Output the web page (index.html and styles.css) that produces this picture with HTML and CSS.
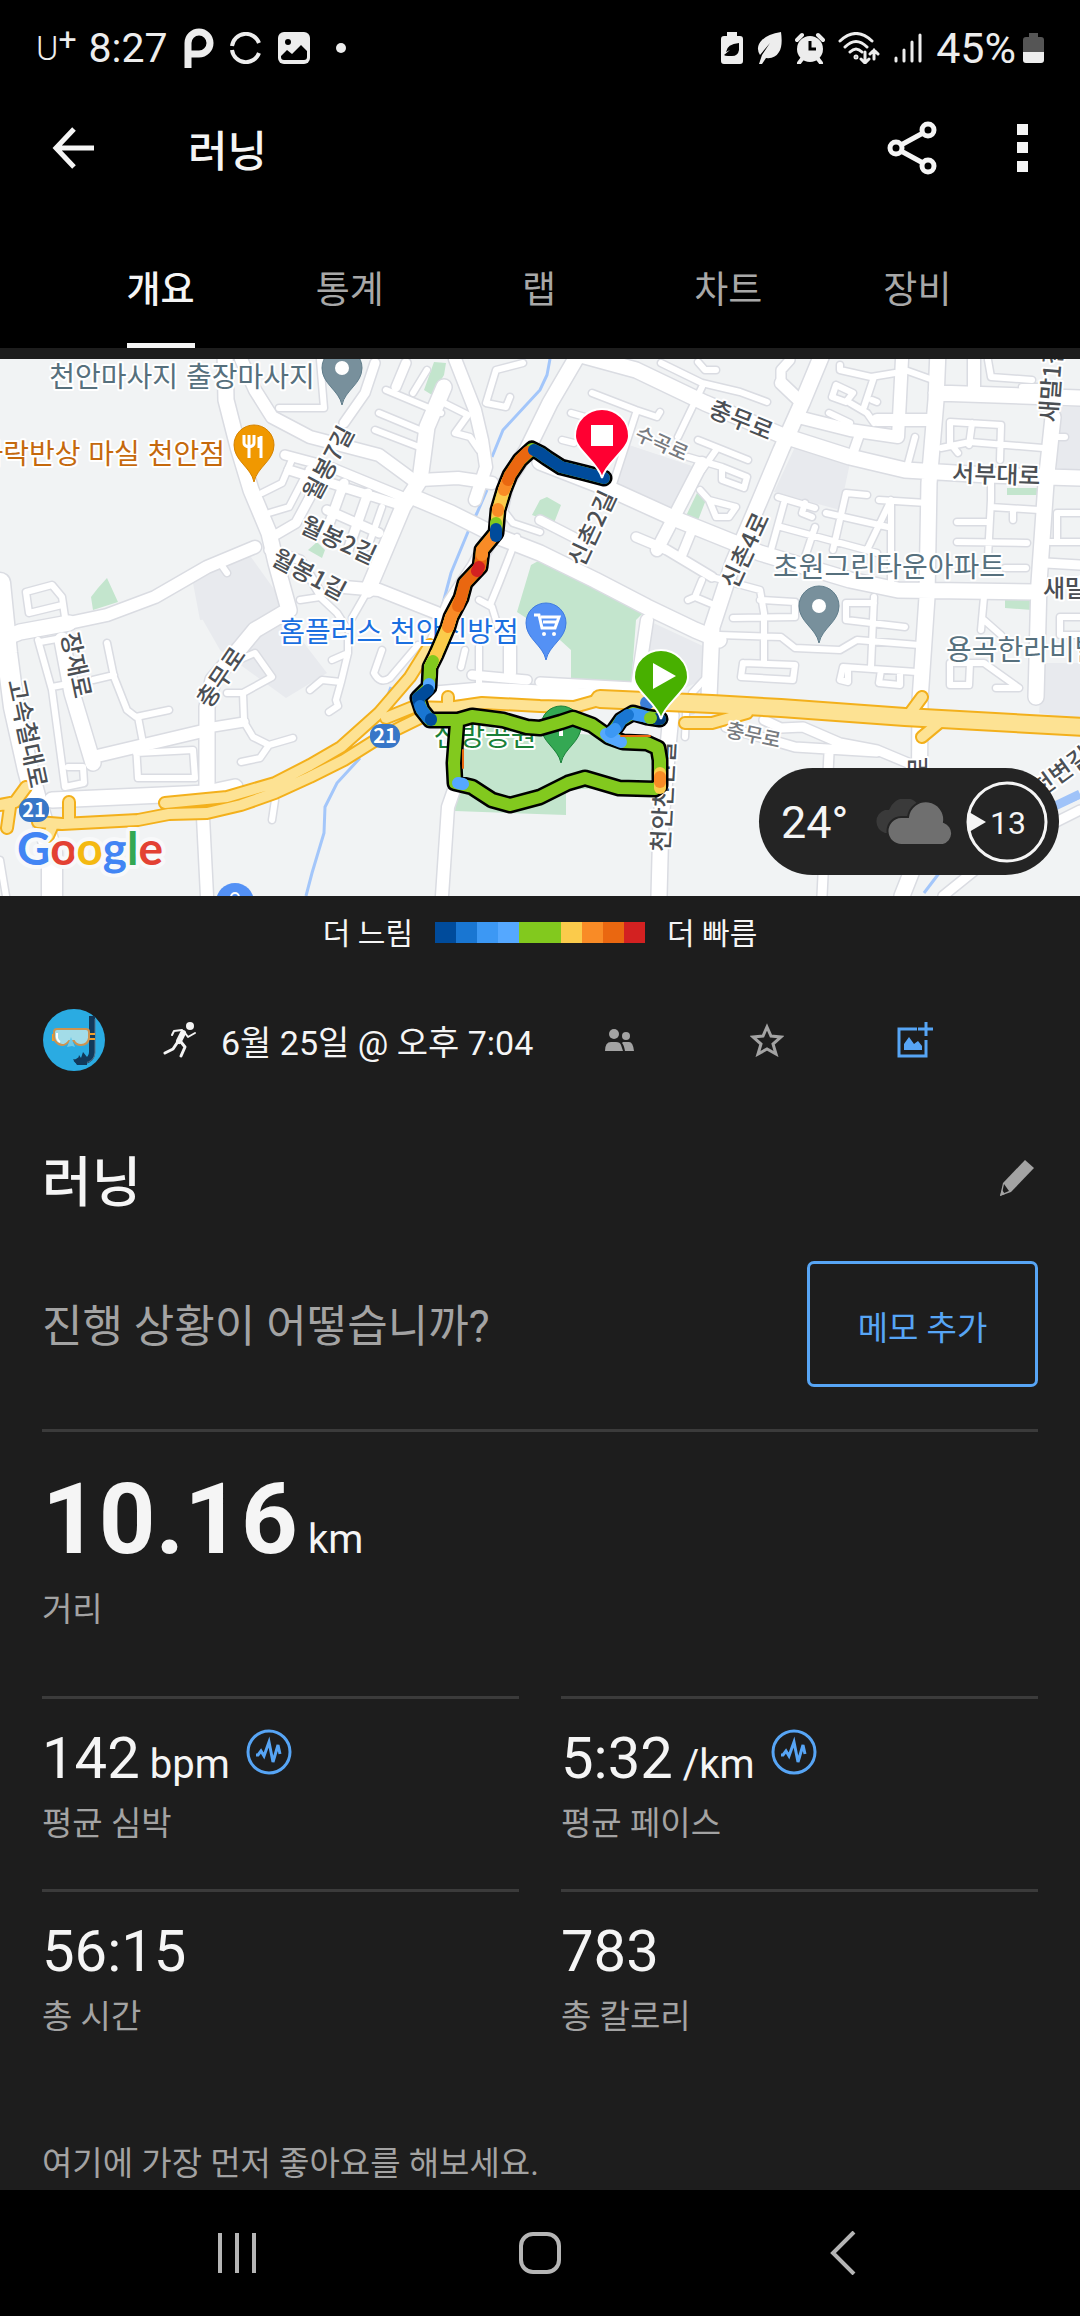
FILE: index.html
```html
<!DOCTYPE html>
<html lang="ko">
<head>
    <meta charset="UTF-8">
    <meta name="viewport" content="width=device-width, initial-scale=1.0">
    <title>러닝</title>
    <link rel="stylesheet" href="styles.css">
</head>
<body>
    <div class="status-bar">
        <div class="status-left">
            <span class="carrier">U<sup>+</sup></span>
            <span class="clock">8:27</span>
            <svg width="30" height="40" viewBox="0 0 30 40"><path d="M4 40V15A11 11 0 1 1 15 26H4" fill="none" stroke="#ededed" stroke-width="7"/></svg>
            <svg width="32" height="32" viewBox="0 0 32 32" fill="none" stroke="#ededed" stroke-width="4"><path d="M2 14A14 14 0 0 1 29 11"/><path d="M2 18A14 14 0 0 0 29 21"/></svg>
            <svg width="32" height="32" viewBox="0 0 32 32"><rect width="32" height="32" rx="6" fill="#ededed"/><circle cx="10" cy="10" r="3" fill="#000"/><path d="M3 24l6-6 5 4 9-9 6 6v6q0 3-3 3H6q-3 0-3-3z" fill="#000"/></svg>
            <span class="dot"></span>
        </div>
        <div class="status-right">
            <svg width="22" height="32" viewBox="0 0 22 32"><path d="M6 0h10v4h3a3 3 0 0 1 3 3v22a3 3 0 0 1-3 3H3a3 3 0 0 1-3-3V7a3 3 0 0 1 3-3h3z" fill="#ededed"/><path d="M18 11v7q-1 6-7 6H7q-3 0-4-1l6-5-4 2q1-8 13-9z" fill="#000"/></svg>
            <svg width="26" height="32" viewBox="0 0 26 32"><path d="M25 0q2 14-2 20-4 7-13 6L6 32H3l3-9 8-12-10 12Q-1 15 6 8 12 2 25 0z" fill="#ededed"/></svg>
            <svg width="30" height="32" viewBox="0 0 30 32"><circle cx="15" cy="17" r="13" fill="#ededed"/><path d="M2 8l5-5M28 8l-5-5M7 27l-3 4M23 27l3 4" stroke="#ededed" stroke-width="4" stroke-linecap="round"/><path d="M15 9v8h6" fill="none" stroke="#000" stroke-width="3"/></svg>
            <svg width="42" height="32" viewBox="0 0 42 32" fill="none" stroke="#ededed" stroke-width="3" stroke-linecap="round"><path d="M2 9Q18-6 34 9M7 15Q18 4 29 15M12 20Q18 14 24 20"/><circle cx="18" cy="25" r="1"/><path d="M27 20v10M23 27l4 4 4-4M36 27V18M32 22l4-4 4 4"/></svg>
            <svg width="30" height="32" viewBox="0 0 30 32" stroke="#ededed" stroke-width="3" stroke-linecap="round"><path d="M3 26v3M11 18v11M19 10v19M27 3v26"/></svg>
            <span class="clock percent">45%</span>
            <svg width="21" height="30" viewBox="0 0 21 30"><path d="M6 0h9v4h3a3 3 0 0 1 3 3v12H0V7a3 3 0 0 1 3-3h3z" fill="#555"/><path d="M0 19h21v8a3 3 0 0 1-3 3H3a3 3 0 0 1-3-3z" fill="#ededed"/></svg>
        </div>
    </div>

    <header class="app-bar">
        <button class="icon-btn" aria-label="뒤로">
            <svg width="42" height="42" viewBox="0 0 42 42" fill="none" stroke="#f5f5f5" stroke-width="5"><path d="M22 2L4 21l18 19M4 21h38"/></svg>
        </button>
        <h1>러닝</h1>
        <button class="icon-btn share" aria-label="공유">
            <svg width="50" height="54" viewBox="0 0 50 54" fill="none" stroke="#f5f5f5" stroke-width="5"><circle cx="9" cy="27" r="6"/><circle cx="41" cy="9" r="6"/><circle cx="41" cy="45" r="6"/><path d="M14 24L36 12M14 30l22 12"/></svg>
        </button>
        <button class="icon-btn" aria-label="더보기">
            <svg width="11" height="48" viewBox="0 0 11 48" fill="#f5f5f5"><path d="M0 0h11v11H0zM0 18h11v11H0zM0 37h11v11H0z"/></svg>
        </button>
    </header>

    <nav class="tabs">
        <button class="tab-btn active">개요</button>
        <button class="tab-btn">통계</button>
        <button class="tab-btn">랩</button>
        <button class="tab-btn">차트</button>
        <button class="tab-btn">장비</button>
    </nav>

    <main>
        <div class="map">
            <svg class="map-canvas" viewBox="0 359 1080 537">
                <defs>
                    <g id="roads">
                        <g class="w6">
                            <path d="M279 408H324L320 360M386 390L441 413M379 413L427 433M375 430L427 450M427 370L413 393M293 457L282 483 262 493M303 480L289 507 269 513M382 507L368 547M65 617L62 597 52 585 26 592 29 613 62 605M220 563L227 573M300 600L320 597 337 613 348 630M368 590L352 618"/>
                            <path d="M523 363L496 370 486 403 506 407 510 397M444 403L468 415 455 433 470 437 479 450M503 510L513 523 540 532M479 600L492 607 499 630M517 537L499 583 490 605"/>
                            <path d="M592 393L636 410 657 417 660 412M636 413L612 487M571 413L585 417M562 440L574 443M702 387L678 437M661 363L702 383 740 392 767 402M698 362L705 370H716M698 440L748 460M716 450L702 470M688 457L722 467 747 477 744 488 722 480V467M709 500L736 507 729 517H716L709 500M700 490L709 500"/>
                            <path d="M778 497L815 508M784 503L771 550M781 527L877 553M867 495L846 493 833 550M826 513L888 527M891 500L867 550M879 500L927 503M891 503V583M815 527L805 557M805 503L802 513 812 517M840 365V370L871 377 895 373M874 377L864 407M872 400L877 402M836 385L853 393 846 402 832 397 836 385M829 413L850 423M850 403L867 413 874 423"/>
                            <path d="M988 360L991 377 1032 380M905 370L933 380M1022 387H1040M950 422L1001 425 1000 460M950 422V443L958 453M941 448L970 442 1043 448M972 423L969 445M1057 437H1065M915 437L907 467M991 483V500L988 557M991 507L1039 510M1013 510V520M957 522H988M957 542L1027 543M1005 568H1026M1057 513H1080M1057 513V540M1050 542H1080"/>
                            <path d="M702 580L695 597 688 600M695 597L719 607M712 577L760 590 764 613V663M733 618L795 617V602L760 600M874 597L871 667M874 603H846V620L905 627M984 597L981 630M984 620L1001 635M1080 617H1060V635H1080M719 635L781 637 795 648 840 650 857 640 919 645M743 663L795 665 793 680 741 677 743 663M917 672L843 667 840 680 848 682V670M881 670L879 683 900 685V672"/>
                            <path d="M950 663H970L969 685H950V663M970 663H984L1019 688 996 688M692 710V693L704 680M685 737L686 713M38 640L52 690 65 787 84 783 83 767H68M40 642L62 638M52 687L68 684M107 643L114 677 127 710 136 717 169 710M93 680L114 675M138 717L143 743M136 753L193 750 195 778 138 778 136 745"/>
                            <path d="M244 720L243 693 272 677 255 653 234 662M227 693H243M244 722L253 737 269 745 293 738M269 745L260 758 241 762M310 690L322 680 341 682 348 653V640M332 660L348 653M341 682L336 700 338 706 329 712M382 650L374 673Q380 685 390 678L418 645M461 667L465 650M479 683V647M275 800L272 820M0 860L6 896"/>
                        </g>
                        <g class="w9">
                            <path d="M344 423L365 393 375 363M406 363L396 387M285 455L330 467 403 497M272 537L296 523 310 497V470M344 483L327 530M368 493L348 550M327 510L379 533M269 550L300 560 320 593M289 470L400 505M540 520L585 543M692 530L681 557M636 537L667 550 712 577M860 433L853 453M1046 563L1080 565M540 682L633 687M726 727L795 747 877 752M764 720L781 728 803 727 840 743 877 750 908 763M829 753L822 896M943 896L1000 850 1080 810M472 675L527 680M207 728L244 722M781 383V370L790 360"/>
                        </g>
                        <g class="w12">
                            <path d="M241 359L255 390 272 417 310 437 379 455 413 480M420 480L458 478 492 483M455 359L475 410 482 440 486 467 475 500M344 587L379 590 437 613M255 547L207 567 155 597 107 615 69 623M702 463L657 550M781 383L802 403M798 417L850 430 898 437 902 359M877 420H933M974 359V390M647 620L636 693M93 757L207 730M203 817L207 896M455 787L448 807 442 896M510 673V647"/>
                        </g>
                        <g class="w15">
                            <path d="M225 350L226 400 238 447 251 490 269 533 276 563 289 610 255 630 241 647 213 680 207 707V790M444 387L427 427 420 480 403 507 382 557 368 590M413 497L451 513 499 537 540 553 595 580 647 607 695 630 719 640M581 350L550 403 527 450 506 483 496 527 475 567 451 603 427 660"/>
                            <path d="M581 355L636 370 705 403 781 435 850 457 905 470 988 475 1080 478M824 350L802 403 781 450 760 500 733 563 712 627 709 697M938 350L936 400 929 483 927 597 920 700 919 853 902 896M936 393L1080 398M1053 417L1046 483 1039 583 1036 697M540 462L612 490 678 520 760 553 850 580 898 590 1036 592M69 623L20 632 0 640M72 693L93 763M62 640L72 693M671 715L661 820 659 896M52 800L207 793 235 787M424 695L482 690 540 693 599 697"/>
                        </g>
                        <g class="w20">
                            <path d="M0 583L7 653 14 707 28 770 38 807 52 853V896"/>
                        </g>
                    </g>
                    <g id="highways">
                        <path class="w9" d="M38 822L62 824 138 820 169 814 207 813 241 805 275 793 310 777 344 760 379 738 424 716M165 803L227 797 275 783 310 765 341 747 379 713 410 677 430 645M386 718L413 707 448 708 482 703 540 706 574 707 599 700M685 723H712L747 713M922 697L908 716M940 722L922 737M0 805L15 802 26 787M10 807L7 828M69 802V820M448 697V708M52 827L48 836"/>
                        <path class="w15" d="M600 699L712 704 781 708 905 717 1085 727"/>
                    </g>
                    <path id="route" d="M604 478L585 473 561 467 547 458 540 453 532 449 520 460 510 475 504 490 498 510 496 533 482 550 480 567 465 583 461 598 451 617 448 627 436 655 430 667 429 687 418 698 422 710 430 720 458 720 472 716 503 720 527 727 540 728 561 722 573 718 592 725 609 737 623 742 647 743 658 748 660 760 660 785 655 789 619 788 585 778 568 783 540 797 510 805 492 800 472 787 455 783 454 763 457 723M660 719L647 717 633 713 621 720 614 730"/>
                </defs>

                <rect y="359" width="1080" height="537" fill="#f1f3f4"/>
                <path fill="#e8eaee" d="M193 583L248 553 289 610 200 620zM200 615L286 600 290 625 327 673 286 698 220 650zM795 447L850 463 840 510 774 492zM623 443L695 467 674 513 614 490zM1057 407H1080V472H1057zM647 620L705 647 702 680 660 700 640 670zM1043 663H1080V720L1039 713z"/>
                <path fill="#c3e5cd" d="M434 362L446 363 444 375 432 395 424 390zM91 597L98 588 107 578 118 602 93 610zM317 542L325 550 322 558 308 550zM540 560L643 613 636 620 631 687 571 692V650L560 640 517 612 531 565zM532 515L540 500 547 497 561 505 554 523zM697 493L707 497 697 523 685 518zM1007 488H1039V495H1007zM1005 597L1032 600V610L1005 608zM462 725L660 740 650 785 566 790V815L455 811z"/>
                <path class="river" d="M550 359L547 375 540 390 503 430 492 457M487 490L477 513 470 527 451 573 442 607M391 687L386 700M360 758L337 783 325 807 324 833 312 873 306 896M1080 797L1057 807M924 893L940 872"/>
                <path d="M1080 794L1055 806" stroke="#9fc3f9" stroke-width="9"/>
                <use href="#roads" class="road-casing"/>
                <use href="#roads" class="road-fill"/>
                <use href="#highways" class="highway-casing"/>
                <use href="#highways" class="highway-fill"/>

                <g class="shield">
                    <rect x="370" y="724" width="30" height="24" rx="11"/>
                    <text x="385" y="743">21</text>
                    <rect x="19" y="798" width="30" height="24" rx="11"/>
                    <text x="34" y="817">21</text>
                </g>

                <!-- place names -->
                <g class="place">
                    <text x="182" y="387">천안마사지 출장마사지</text>
                    <text x="889" y="577">초원그린타운아파트</text>
                    <text x="946" y="660" class="from-start">용곡한라비발디</text>
                    <text x="225" y="464" class="food">가락반상 마실 천안점</text>
                    <text x="399" y="642" class="shop">홈플러스 천안신방점</text>
                    <text x="485" y="746" class="park">신방공원</text>
                </g>
                <g class="street">
                    <text transform="translate(336 467) rotate(-62)">월봉7길</text>
                    <text transform="translate(335 548) rotate(25)">월봉2길</text>
                    <text transform="translate(305 582) rotate(28)">월봉1길</text>
                    <text transform="translate(738 428) rotate(22)">충무로</text>
                    <text transform="translate(600 532) rotate(-65)">신촌2길</text>
                    <text transform="translate(753 554) rotate(-65)">신촌4로</text>
                    <text transform="translate(996 483) rotate(2)">서부대로</text>
                    <text transform="translate(1060 383) rotate(-86)">새말1길</text>
                    <text transform="translate(1065 597)">새말</text>
                    <text transform="translate(19 735) rotate(78)">고속철대로</text>
                    <text transform="translate(68 667) rotate(78)">장재로</text>
                    <text transform="translate(228 682) rotate(-56)">충무로</text>
                    <text transform="translate(672 797) rotate(-87)">천안천변길</text>
                    <text transform="translate(927 768) rotate(-90)">로</text>
                    <text transform="translate(1066 779) rotate(-36)">천변길</text>
                    <text class="minor" transform="translate(659 450) rotate(24)">수곡로</text>
                    <text class="minor" transform="translate(752 742) rotate(12)">충무로</text>
                </g>

                <!-- place pins -->
                <g stroke-width="1">
                    <path d="M342 405C339 390 322 384 322 368A20 20 0 0 1 362 368C362 384 345 390 342 405zM819 643C816 628 799 622 799 606A20 20 0 0 1 839 606C839 622 822 628 819 643z" fill="#78909c" stroke="#607d8b"/>
                    <path d="M254 482C251 467 234 461 234 445A20 20 0 0 1 274 445C274 461 257 467 254 482z" fill="#f09800" stroke="#d58300"/>
                    <path d="M546 660C543 645 526 639 526 623A20 20 0 0 1 566 623C566 639 549 645 546 660z" fill="#5491f5" stroke="#3f7be0"/>
                    <path d="M561 763C558 748 541 742 541 726A20 20 0 0 1 581 726C581 742 564 748 561 763z" fill="#34a853" stroke="#188038"/>
                    <circle cx="235" cy="902" r="19" fill="#5491f5"/>
                    <circle cx="235" cy="897" r="4" fill="none" stroke="#fff" stroke-width="2"/>
                    <circle cx="342" cy="368" r="7" fill="#fff"/>
                    <circle cx="819" cy="606" r="7" fill="#fff"/>
                    <path d="M561 716l-7 12h5v8h4v-8h5z" fill="#fff"/>
                    <path d="M244 435v8q0 3 5 4v11M249 435v12M254 435v8q0 3-5 4M261 436v22M259 437v11" fill="none" stroke="#fff" stroke-width="3"/>
                    <path d="M534 615h5l3 13h13l4-11h-18M543 622h14" fill="none" stroke="#fff" stroke-width="3"/>
                    <circle cx="544" cy="634" r="2" fill="#fff"/><circle cx="554" cy="634" r="2" fill="#fff"/>
                    <circle cx="647" cy="703" r="7" fill="#3c7dd6"/>
                </g>

                <!-- route, coloured by pace -->
                <g class="route">
                    <use href="#route" class="route-edge"/>
                    <use href="#route" stroke="#82c91e"/>
                    <path d="M430 667L436 655 448 627 451 617" stroke="#fbcb4b"/>
                    <path d="M448 627L451 617 461 598" stroke="#f98b26"/>
                    <path d="M458 606L461 598 465 583 480 567 482 550" stroke="#ea6710"/>
                    <path d="M477 571L479 567" stroke="#d32121"/>
                    <path d="M482 555V550L496 533" stroke="#f98b26"/>
                    <path d="M496 528L498 510 504 490 508 480" stroke="#fbcb4b"/>
                    <path d="M498 511V509M504 490L507 482" stroke="#f98b26"/>
                    <path d="M496 524V523" stroke="#82c91e"/>
                    <path d="M496 536V529" stroke="#004b9b"/>
                    <path d="M508 480L510 475 520 460 528 452" stroke="#ea6710"/>
                    <path d="M604 478L585 473 561 467 547 458 540 453 534 450" stroke="#004b9b"/>
                    <path d="M436 655V654" stroke="#fbcb4b"/>
                    <path d="M430 676V667L433 661" stroke="#82c91e"/>
                    <path d="M429 687V684" stroke="#55a8ff"/>
                    <path d="M428 690L418 698 419 703" stroke="#004b9b"/>
                    <path d="M420 706L422 710 428 718" stroke="#1976d2"/>
                    <path d="M431 720V719" stroke="#004b9b"/>
                    <path d="M606 734L609 737 621 742" stroke="#55a8ff"/>
                    <path d="M660 788V773" stroke="#fbcb4b"/>
                    <path d="M660 782V777" stroke="#f98b26"/>
                    <path d="M458 783L463 784" stroke="#55a8ff"/>
                    <path d="M463 750V768" stroke="#ea6710" stroke-width="2"/>
                    <path d="M621 736H650" stroke="#ea6710" stroke-width="2"/>
                    <path d="M660 719H657" stroke="#003c80"/>
                    <path d="M650 718L643 716 633 714" stroke="#3c98f4"/>
                    <path d="M651 718H650" stroke="#82c91e"/>
                    <path d="M628 715L621 720 617 727" stroke="#1976d2"/>
                    <path d="M615 729L611 732" stroke="#3c98f4"/>
                </g>
                <g stroke="#fff" stroke-width="2">
                    <path d="M602 478C598 462 575 450 575 436A27 27 0 0 1 629 436C629 450 606 462 602 478z" fill="#ff0032"/>
                    <path d="M661 719C657 703 634 691 634 677A27 27 0 0 1 688 677C688 691 665 703 661 719z" fill="#48b000"/>
                </g>
                <path d="M591 425h22v21h-22zM653 663v26l23-13z" fill="#fff"/>

                <text class="google" x="17" y="865"><tspan fill="#4285f4">G</tspan><tspan fill="#e34133">o</tspan><tspan fill="#f4b912">o</tspan><tspan fill="#4285f4">g</tspan><tspan fill="#34a853">l</tspan><tspan fill="#e34133">e</tspan></text>
            </svg>

            <div class="weather">
                <span class="temp">24°</span>
                <svg class="cloud" width="82" height="46" viewBox="0 0 82 46"><path d="M12 34A12 12 0 0 1 12 11h4a17 17 0 0 1 32-1L30 34z" fill="#3a3a3a"/><path d="M29 46a14 14 0 0 1-1-28h7a18 18 0 0 1 36 5 12 12 0 0 1-1 23z" fill="#6f6f6f" stroke="#242424" stroke-width="2"/></svg>
                <span class="wind">
                    <svg class="wind-ring" width="82" height="82" viewBox="0 0 82 82"><circle cx="41" cy="41" r="39" fill="none" stroke="#f5f5f5" stroke-width="3"/><path d="M3 31l17 10L3 51z" fill="#f5f5f5"/></svg>
                    <span>13</span>
                </span>
            </div>
        </div>

        <div class="legend">
            <span>더 느림</span>
            <span class="legend-bar"><i class="c1"></i><i class="c2"></i><i class="c3"></i><i class="c4"></i><i class="c5"></i><i class="c5"></i><i class="c6"></i><i class="c7"></i><i class="c8"></i><i class="c9"></i></span>
            <span>더 빠름</span>
        </div>

        <div class="meta">
            <svg class="avatar" width="62" height="62" viewBox="0 0 62 62">
                <circle cx="31" cy="31" r="31" fill="#2aabe2"/>
                <path d="M49 7v36q0 8-8 9-6 1-8-2" fill="none" stroke="#12395a" stroke-width="6"/>
                <path d="M52 10v34q-1 9-11 10" fill="none" stroke="#54748d" stroke-width="1"/>
                <path d="M30 50l5 1 1-5 2 3 2-6 4 5v8H34z" fill="#12395a"/>
                <path d="M9 25h3v7H9zM46 24h6v7h-6z" fill="#f0a02c"/><path d="M47 26h5v3h-5z" fill="#12395a"/>
                <path d="M14 20h29q3 0 3 3v6q-1 7-8 7-5 0-7-4h-5q-3 4-7 4-7-1-8-8v-5q0-3 3-3z" fill="#a3dce8" stroke="#cd9350" stroke-width="2"/>
                <path d="M14 24v5q1 3 3 4" fill="none" stroke="#fff" stroke-width="2"/>
                <path d="M28 28l-4 10 5-1 3 1z" fill="#6cc9e9"/>
            </svg>
            <svg class="runner" width="34" height="36" viewBox="0 0 34 36" fill="none" stroke="#f5f5f5" stroke-linecap="round" stroke-linejoin="round"><circle cx="27" cy="4" r="4" fill="#f5f5f5" stroke="none"/><path d="M20 11l-4 8" stroke-width="6"/><path d="M19 8l-8 1-2 4M22 11l3 4 7-4" stroke-width="2"/><path d="M18 20l4 5-4 9" stroke-width="3"/><path d="M14 21l-4 6-8 4" stroke-width="3"/></svg>
            <span class="date">6월 25일 @ 오후 7:04</span>
            <div class="meta-actions">
                <button aria-label="공개 범위"><svg width="30" height="24" viewBox="0 0 30 24" fill="#a3a3a3"><circle cx="10" cy="6" r="5"/><circle cx="22" cy="8" r="4"/><path d="M1 23q0-9 6-9h5q4 0 5 3l2 6zM19 14h6q4 0 5 9h-9q-1-6-3-8z"/></svg></button>
                <button aria-label="즐겨찾기"><svg width="34" height="34" viewBox="0 0 34 34" fill="none" stroke="#a3a3a3" stroke-width="3"><path d="M17 4l4 9 10 1-8 7 3 10-9-5-9 5 3-10-8-7 10-1z"/></svg></button>
                <button aria-label="사진 추가"><svg width="36" height="36" viewBox="0 0 36 36" fill="none" stroke="#57a5f5" stroke-width="3"><path d="M20 7H2v27h27V18M29 0v14M21 7h15"/><path d="M7 28v-6l5-7 5 7 4-3 4 5v4z" fill="#57a5f5" stroke="none"/></svg></button>
            </div>
        </div>

        <div class="activity-title">
            <h2>러닝</h2>
            <button class="icon-btn" aria-label="이름 수정"><svg width="36" height="36" viewBox="0 0 36 36"><path d="M27 0l9 8-23 24-11 4 3-13z" fill="#a3a3a3"/><path d="M6 24l5 7-7 3z" fill="#1d1d1d"/><path d="M2 36l2-6 3 4z" fill="#a3a3a3"/></svg></button>
        </div>

        <div class="note">
            <p>진행 상황이 어떻습니까?</p>
            <button class="note-btn">메모 추가</button>
        </div>

        <section class="distance">
            <div class="distance-value">10.16<small>km</small></div>
            <div class="stat-label">거리</div>
        </section>

        <section class="stats">
            <div class="stat">
                <div class="stat-value">142<small>bpm</small>
                    <svg class="pulse" width="46" height="46" viewBox="0 0 46 46" fill="none" stroke="#57a5f5" stroke-width="3"><circle cx="23" cy="23" r="21"/><path d="M10 26h2l3-4 3 5 5-14 4 20 5-17 2 9"/></svg>
                </div>
                <div class="stat-label">평균 심박</div>
            </div>
            <div class="stat">
                <div class="stat-value">5:32<small>/km</small>
                    <svg class="pulse" width="46" height="46" viewBox="0 0 46 46" fill="none" stroke="#57a5f5" stroke-width="3"><circle cx="23" cy="23" r="21"/><path d="M10 26h2l3-4 3 5 5-14 4 20 5-17 2 9"/></svg>
                </div>
                <div class="stat-label">평균 페이스</div>
            </div>
            <div class="stat">
                <div class="stat-value">56:15</div>
                <div class="stat-label">총 시간</div>
            </div>
            <div class="stat">
                <div class="stat-value">783</div>
                <div class="stat-label">총 칼로리</div>
            </div>
        </section>

        <p class="likes">여기에 가장 먼저 좋아요를 해보세요.</p>
    </main>

    <nav class="system-nav">
        <button aria-label="최근 앱"><svg width="44" height="44" viewBox="0 0 44 44" fill="none" stroke="#b5b5b5" stroke-width="4"><path d="M5 2v40M22 2v40M39 2v40"/></svg></button>
        <button aria-label="홈"><svg width="44" height="44" viewBox="0 0 44 44" fill="none" stroke="#b5b5b5" stroke-width="4"><rect x="3" y="3" width="38" height="38" rx="12"/></svg></button>
        <button aria-label="뒤로"><svg width="44" height="44" viewBox="0 0 44 44" fill="none" stroke="#b5b5b5" stroke-width="4"><path d="M33 1L12 22l21 21"/></svg></button>
    </nav>
</body>
</html>
```

FILE: styles.css
```css
* {
    box-sizing: border-box;
}

body {
    margin: 0;
    min-height: 100vh;
    display: flex;
    flex-direction: column;
    background: #1d1d1d;
    color: #f5f5f5;
    font-family: Roboto, "Noto Sans CJK KR", sans-serif;
    font-size: 33px;
}

h1, h2, p {
    margin: 0;
}

button {
    background: none;
    border: none;
    padding: 0;
    color: inherit;
    font-family: inherit;
    cursor: pointer;
}

svg {
    display: block;
    flex: none;
}

/* Status bar */
.status-bar {
    display: flex;
    justify-content: space-between;
    align-items: center;
    height: 96px;
    padding: 0 36px;
    background: #000;
    color: #ededed;
}

.status-left,
.status-right {
    display: flex;
    align-items: center;
}

.status-left {
    gap: 16px;
}

.status-right {
    gap: 13px;
}

.carrier {
    font-size: 34px;
    font-weight: 300;
    line-height: 48px;
    margin-right: -4px;
}

.carrier sup {
    font-size: 32px;
    font-weight: 400;
    line-height: 0;
    vertical-align: 10px;
}

.clock {
    font-size: 41px;
    line-height: 48px;
}

.percent {
    margin-right: -6px;
    font-size: 43px;
}

.dot {
    width: 10px;
    height: 10px;
    margin-left: 10px;
    border-radius: 50%;
    background: #ededed;
}

/* App bar and tabs */
.app-bar {
    display: flex;
    align-items: center;
    height: 104px;
    padding: 0 52px;
    background: #000;
}

.app-bar h1 {
    flex: 1;
    margin-left: 94px;
    padding-top: 8px;
    font-size: 43px;
    font-weight: 500;
    line-height: 60px;
}

.share {
    margin-right: 80px;
}

.tabs {
    display: grid;
    grid-template-columns: repeat(5, 1fr);
    justify-items: center;
    padding: 61px 68px 0 66px;
    background: #000;
}

.tab-btn {
    height: 87px;
    padding-bottom: 22px;
    border-bottom: 5px solid transparent;
    color: #a8a8a8;
    font-size: 37px;
    line-height: 60px;
}

.tab-btn.active {
    color: #f5f5f5;
    border-color: #f5f5f5;
    font-weight: 500;
}

/* Map */
main {
    flex: 1;
}

.map {
    position: relative;
    margin-top: 11px;
}

.map-canvas {
    width: 100%;
    height: auto;
    font-family: "Noto Sans CJK KR", sans-serif;
}

.w6 { stroke-width: calc(6px + var(--edge)); }
.w9 { stroke-width: calc(9px + var(--edge)); }
.w12 { stroke-width: calc(12px + var(--edge)); }
.w15 { stroke-width: calc(15px + var(--edge)); }
.w20 { stroke-width: calc(20px + var(--edge)); }

.road-casing,
.road-fill,
.highway-casing,
.highway-fill {
    --edge: 0px;
    fill: none;
    stroke: #fff;
    stroke-linecap: round;
    stroke-linejoin: round;
}

.road-casing {
    --edge: 3px;
    stroke: #dadce2;
}

.highway-casing {
    --edge: 5px;
    stroke: #f3b01c;
}

.highway-fill {
    --edge: 1px;
    stroke: #fde293;
}

.river {
    fill: none;
    stroke: #a3c6fa;
    stroke-width: 3px;
}

.shield rect {
    fill: #3877c8;
}

.shield text {
    fill: #fff;
    font-size: 20px;
    font-weight: 700;
    text-anchor: middle;
}

.place text,
.street text {
    text-anchor: middle;
    paint-order: stroke;
    stroke: #fff;
    stroke-width: 4px;
    stroke-linejoin: round;
}

.place {
    font-size: 28px;
    fill: #56707d;
}

.place .from-start {
    text-anchor: start;
}

.place .food {
    fill: #c5690d;
    text-anchor: end;
}

.place .shop {
    fill: #1a6fe0;
}

.place .park {
    fill: #188038;
}

.street {
    font-size: 24px;
    font-weight: 500;
    fill: #4b4f54;
}

.street .minor {
    font-size: 20px;
    fill: #777b80;
}

.route {
    fill: none;
    stroke-width: 12px;
    stroke-linecap: round;
    stroke-linejoin: round;
}

.route-edge {
    stroke: #000;
    stroke-width: 17px;
}

.google {
    font-family: Lato, sans-serif;
    font-size: 46px;
    font-weight: 700;
    paint-order: stroke;
    stroke: #f8f9fa;
    stroke-width: 8px;
    stroke-linejoin: round;
}

.weather {
    position: absolute;
    right: 21px;
    bottom: 21px;
    display: flex;
    align-items: center;
    width: 300px;
    height: 107px;
    padding: 0 11px 0 22px;
    border-radius: 54px;
    background: #242424;
}

.temp {
    padding-top: 3px;
    font-size: 45px;
    line-height: 52px;
}

.cloud {
    margin-left: auto;
}

.wind {
    position: relative;
    width: 82px;
    margin-left: 11px;
    padding: 2px 0 0 24px;
    font-size: 32px;
    line-height: 80px;
}

.wind-ring {
    position: absolute;
    top: 0;
    left: 0;
}

/* Pace legend */
.legend {
    display: flex;
    justify-content: center;
    align-items: center;
    gap: 22px;
    padding: 14px 0;
    font-size: 30px;
    line-height: 40px;
}

.legend span {
    padding-top: 4px;
}

.legend .legend-bar {
    display: flex;
    padding: 0;
}

.legend-bar i {
    width: 21px;
    height: 21px;
}

.c1 { background: #004b9b; }
.c2 { background: #1976d2; }
.c3 { background: #3c98f4; }
.c4 { background: #55a8ff; }
.c5 { background: #82c91e; }
.c6 { background: #fbcb4b; }
.c7 { background: #f98b26; }
.c8 { background: #ea6710; }
.c9 { background: #d32121; }

/* Activity header */
.meta {
    display: flex;
    align-items: center;
    margin: 41px 91px 0 43px;
}

.runner {
    margin: 0 24px 0 58px;
}

.date {
    padding-top: 6px;
    font-size: 34px;
    line-height: 48px;
}

.meta-actions {
    display: flex;
    margin-left: auto;
}

.meta-actions button {
    display: flex;
    justify-content: center;
    align-items: center;
    width: 148px;
    height: 62px;
}

.activity-title {
    display: flex;
    justify-content: space-between;
    align-items: flex-start;
    height: 60px;
    margin: 80px 46px 0 42px;
}

.activity-title h2 {
    padding-top: 3px;
    font-size: 54px;
    font-weight: 500;
    line-height: 60px;
}

.activity-title .icon-btn {
    padding-top: 9px;
}

.note {
    display: flex;
    justify-content: space-between;
    align-items: center;
    margin: 50px 42px 0;
    padding-bottom: 42px;
    border-bottom: 3px solid #3b3b3b;
    color: #a3a3a3;
    font-size: 44px;
    line-height: 60px;
}

.note p {
    padding-top: 6px;
}

.note-btn {
    width: 231px;
    height: 126px;
    padding-top: 3px;
    border: 3px solid #57a5f5;
    border-radius: 7px;
    color: #57a5f5;
    font-size: 33px;
}

/* Numbers */
.distance {
    padding: 37px 42px 62px;
}

.distance-value {
    margin-bottom: 17px;
    font-size: 99px;
    font-weight: 700;
    line-height: 100px;
}

small {
    margin-left: 10px;
    font-size: 40px;
    font-weight: 400;
    line-height: 1;
}

.stats {
    display: grid;
    grid-template-columns: 1fr 1fr;
    column-gap: 42px;
    padding: 0 42px;
}

.stat {
    padding: 27px 0 41px;
    border-top: 3px solid #3b3b3b;
}

.stat-value {
    display: flex;
    align-items: baseline;
    height: 64px;
    margin-bottom: 10px;
    font-size: 58px;
    line-height: 64px;
}

.pulse {
    align-self: flex-start;
    margin: 3px 0 0 16px;
}

.stat-label {
    color: #a3a3a3;
    font-size: 33px;
    line-height: 48px;
}

.likes {
    margin: 99px 42px 2px;
    color: #a3a3a3;
    font-size: 33px;
    line-height: 48px;
}

.stats + .likes {
    margin-top: 58px;
}

/* System navigation */
.system-nav {
    display: flex;
    align-items: center;
    height: 126px;
    padding: 0 85px;
    background: #000;
}

.system-nav button {
    flex: 1;
    display: flex;
    justify-content: center;
    align-items: center;
    height: 126px;
}
```
